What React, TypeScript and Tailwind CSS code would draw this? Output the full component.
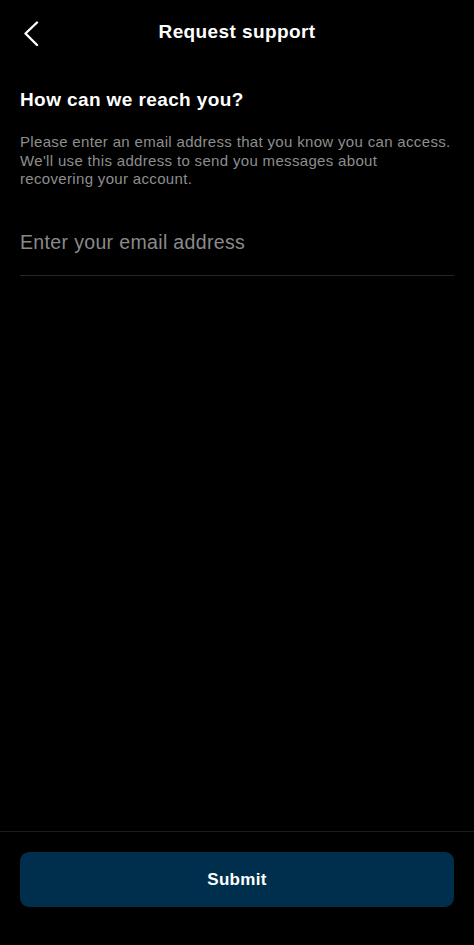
import React from 'react';

export default function App() {
  return (
    <div className="min-h-screen w-full bg-black flex flex-col text-white font-['Liberation_Sans',Arial,sans-serif]">
      {/* header */}
      <div className="relative h-[64px] flex items-center justify-center">
        <button className="absolute left-[18px] top-[19px] w-[26px] h-[30px] flex items-center justify-center">
          <svg width="18" height="26" viewBox="0 0 18 26" fill="none">
            <path d="M15 1.5 L3.5 12.5 L15 24" stroke="white" strokeWidth="2.4" strokeLinecap="round" strokeLinejoin="round" />
          </svg>
        </button>
        <h1 className="text-[19px] font-bold tracking-[0.4px]">Request support</h1>
      </div>

      <div className="flex-1 px-5">
        <h2 className="mt-[24px] text-[19px] font-bold leading-[24px] tracking-[0.4px]">How can we reach you?</h2>
        <p className="mt-[21px] text-[15px] leading-[18.6px] tracking-[0.33px] text-[#8e8e8e]">
          Please enter an email address that you know you can access. We'll use this address to send you messages about recovering your account.
        </p>
        <div className="mt-[40px] border-b border-[#262626] pb-[19px]">
          <input
            type="email"
            placeholder="Enter your email address"
            className="w-full bg-transparent outline-none text-[19.5px] leading-[26px] tracking-[0.35px] text-white placeholder:text-[#8a8a8a]"
          />
        </div>
      </div>

      <div className="border-t border-[#1c1c1c] px-5 pt-[20px] pb-[38px]">
        <button className="w-full h-[55px] rounded-[9px] bg-[#002f4e] text-[17px] font-bold tracking-[0.3px] text-white">
          Submit
        </button>
      </div>
    </div>
  );
}
